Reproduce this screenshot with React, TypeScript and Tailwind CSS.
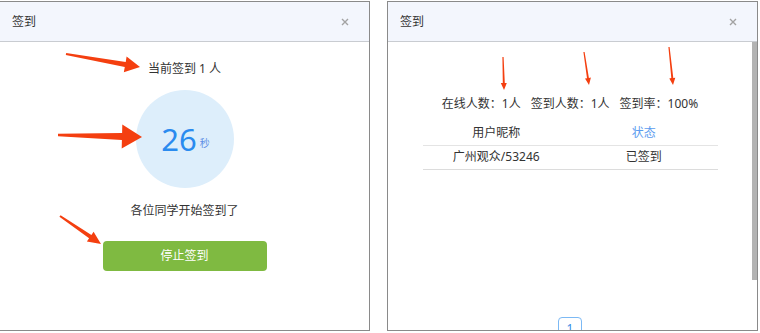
import React from 'react';

type Pt = [number, number];

// builds a filled arrow polygon: thin tail, wider shaft, triangle head
function arrowPoints(tail: Pt, tip: Pt, tailW: number, shaftW: number, headLen: number, headW: number) {
  const dx = tip[0] - tail[0];
  const dy = tip[1] - tail[1];
  const len = Math.hypot(dx, dy);
  const ux = dx / len;
  const uy = dy / len;
  const nx = -uy;
  const ny = ux;
  const bx = tip[0] - ux * headLen;
  const by = tip[1] - uy * headLen;
  const p = (x: number, y: number) => `${x.toFixed(1)},${y.toFixed(1)}`;
  return [
    p(tail[0] + (nx * tailW) / 2, tail[1] + (ny * tailW) / 2),
    p(bx + (nx * shaftW) / 2, by + (ny * shaftW) / 2),
    p(bx + (nx * headW) / 2, by + (ny * headW) / 2),
    p(tip[0], tip[1]),
    p(bx - (nx * headW) / 2, by - (ny * headW) / 2),
    p(bx - (nx * shaftW) / 2, by - (ny * shaftW) / 2),
    p(tail[0] - (nx * tailW) / 2, tail[1] - (ny * tailW) / 2),
  ].join(' ');
}

const arrows = [
  arrowPoints([66, 54], [140, 67], 2, 5, 15, 16),
  arrowPoints([58, 135], [142, 137], 2.5, 7, 20, 24),
  arrowPoints([60, 216], [101, 244], 2, 4, 13, 12),
  arrowPoints([503, 57], [504, 90], 1.2, 2, 7, 6),
  arrowPoints([584, 52], [589, 85], 1.2, 2, 7, 6),
  arrowPoints([669, 47], [673, 85], 1.2, 2, 7, 6),
];

const CloseIcon = () => (
  <svg width="8" height="8" viewBox="0 0 8 8" className="text-[#a3a3a3]">
    <path d="M1 1 L7 7 M7 1 L1 7" stroke="currentColor" strokeWidth="1.4" />
  </svg>
);

const Header = () => (
  <div className="h-[40px] shrink-0 flex items-center justify-between bg-[#f3f6fd] border-b border-[#c9ccd1] pl-[12px] pr-[20px] text-[12px] text-[#333]">
    <span>签到</span>
    <CloseIcon />
  </div>
);

export default function App() {
  return (
    <div
      className="relative w-[760px] h-[333px] bg-white text-[#333] overflow-hidden"
      style={{ fontFamily: '"Noto Sans", "Noto Sans CJK SC", sans-serif' }}
    >
      <div className="flex gap-[17px] pt-px">
        {/* left dialog */}
        <div className="w-[370px] h-[330px] flex flex-col border-t border-r border-b border-[#8a8a8a]">
          <Header />
          <div className="flex flex-col items-center">
            <div className="mt-[20px] text-[12px] leading-[14px]">当前签到 1 人</div>
            <div className="mt-[14px] w-[98px] h-[98px] rounded-full bg-[#ddeefb] flex items-center justify-center">
              <span className="text-[31px] leading-none text-[#2a8bef] ml-[2px]">26</span>
              <span className="text-[10px] text-[#5d8fe6] ml-[3px] mt-[8px]">秒</span>
            </div>
            <div className="mt-[16px] text-[12px] leading-[14px]">各位同学开始签到了</div>
            <button className="mt-[23px] w-[164px] h-[30px] rounded-[4px] bg-[#7fba41] text-white text-[12px]">
              停止签到
            </button>
          </div>
        </div>

        {/* right dialog */}
        <div className="w-[371px] h-[330px] flex flex-col border border-[#8a8a8a]">
          <Header />
          <div className="flex-1 flex overflow-hidden">
            <div className="flex-1 flex flex-col items-center">
              <div className="mt-[55px] flex gap-[10px] text-[12px] leading-[14px]">
                <span>在线人数：1人</span>
                <span>签到人数：1人</span>
                <span>签到率：100%</span>
              </div>
              <table className="mt-[10px] w-[295px] text-[12px] leading-[14px] table-fixed border-collapse">
                <thead>
                  <tr className="border-b border-[#e4e4e4]">
                    <th className="font-normal h-[24px] p-0 text-[#333]">用户昵称</th>
                    <th className="font-normal h-[24px] p-0 text-[#5c9cef]">状态</th>
                  </tr>
                </thead>
                <tbody>
                  <tr className="border-b border-[#dcdcdc]">
                    <td className="text-center h-[24px] p-0">广州观众/53246</td>
                    <td className="text-center h-[24px] p-0">已签到</td>
                  </tr>
                </tbody>
              </table>
              <div className="mt-[147px] w-[24px] h-[24px] shrink-0 rounded-[4px] border border-[#7cb9f4] flex items-center justify-center text-[12px] text-[#3a8ee6]">
                1
              </div>
            </div>
            <div className="w-[5px] shrink-0">
              <div className="h-[238px] bg-[#b3b3b3]" />
            </div>
          </div>
        </div>
      </div>

      {/* annotation arrows */}
      <svg className="absolute inset-0 pointer-events-none" width="760" height="333">
        {arrows.map((pts, i) => (
          <polygon key={i} points={pts} fill="#f43f10" />
        ))}
      </svg>
    </div>
  );
}
